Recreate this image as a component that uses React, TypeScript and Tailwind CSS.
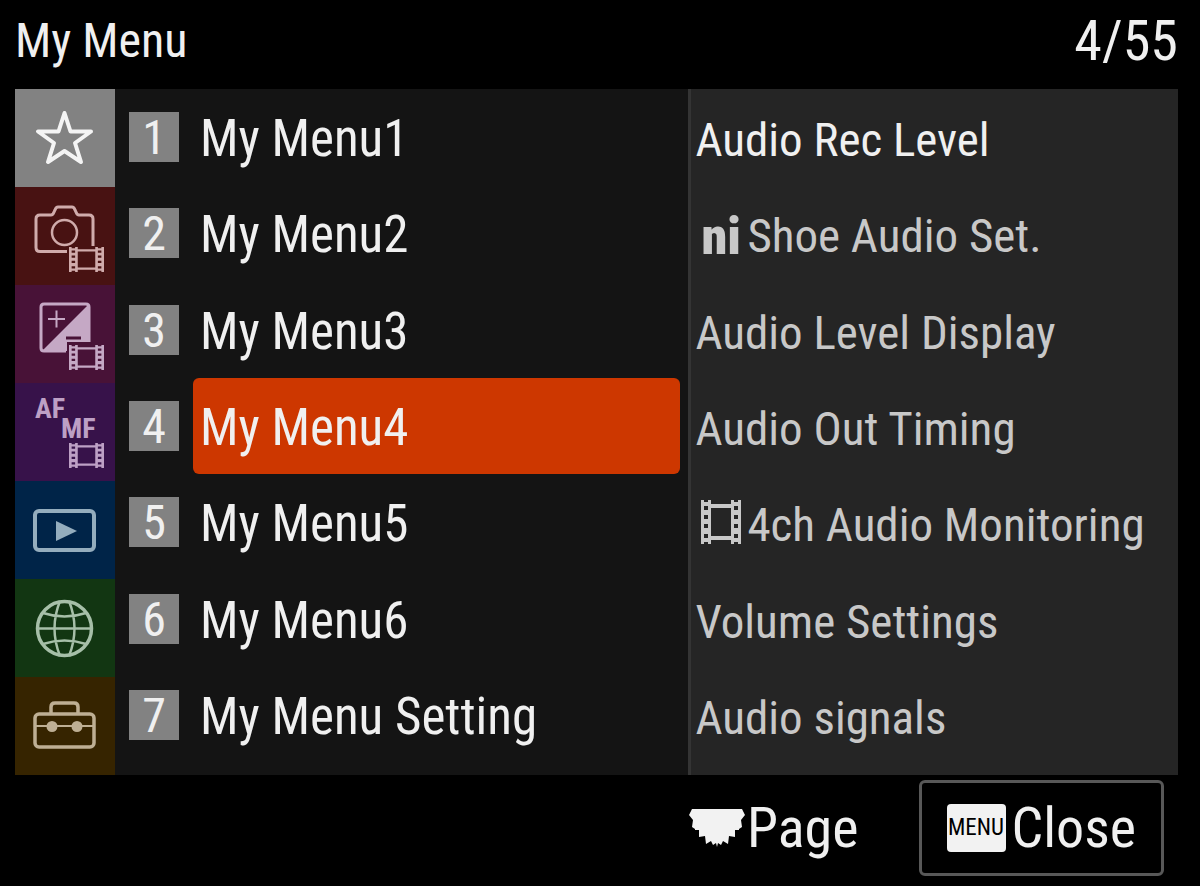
import React from 'react';

type IconProps = { className?: string };

function FilmIcon({ className }: IconProps) {
    return (
        <svg viewBox="0 0 40 44" preserveAspectRatio="none" className={className} fill="currentColor" stroke="none" aria-hidden="true">
            <path d="M0 0h3v2h4V0h3v4h20V0h3v2h4V0h3v44h-3v-2h-4v2h-3v-4H10v4H7v-2H3v2H0zM10 8v28h20V8zM3 6v4h4V6zM3 15v4h4v-4zM3 24v4h4v-4zM3 34v4h4v-4zM33 6v4h4V6zM33 15v4h4v-4zM33 24v4h4v-4zM33 34v4h4v-4z" fillRule="evenodd" />
        </svg>
    );
}

function StarIcon() {
    return (
        <svg viewBox="0 0 100 98" className="w-full" fill="none" stroke="#f4f4f4" strokeWidth="4" strokeLinejoin="round" aria-hidden="true">
            <path d="M49.500 24L55.500 42.500H76L60 54L66 73L49.500 62L33 73L39 54L23 42.500H43.500Z" />
        </svg>
    );
}

function CameraIcon() {
    return (
        <svg viewBox="0 0 100 98" className="w-full text-[#d0abab]" fill="none" stroke="currentColor" strokeWidth="3" aria-hidden="true">
            <path d="M52 64.500H25q-4 0-4-4V32q0-4 4-4h11q2 0 3-3l1-2q1-3 3-3h14q2 0 3 3l1 2q1 3 3 3h10q4 0 4 4v27" />
            <circle cx="49.500" cy="45.500" r="12.500" strokeWidth="2.500" />
            <svg x="54" y="60" width="35" height="25"><FilmIcon /></svg>
        </svg>
    );
}

function ExposureIcon() {
    return (
        <svg viewBox="0 0 100 98" className="w-full text-[#c5a8c5]" fill="none" stroke="currentColor" aria-hidden="true">
            <path d="M51 66H29q-3 0-3-3V22q0-3 3-3h42q3 0 3 3v35" strokeWidth="3" />
            <path d="M28 65L73 20v37H52v9H28z" fill="currentColor" stroke="none" />
            <path d="M33 34h17M41.500 25.500v17" strokeWidth="2" />
            <path d="M51 53h15" stroke="#481237" strokeWidth="3" />
            <svg x="54" y="60" width="35" height="25"><FilmIcon /></svg>
        </svg>
    );
}

function FocusIcon() {
    return (
        <div className="flex h-full flex-col pt-4 pl-5 text-[#bda0c5]">
            <span className="text-[28px]/5 font-bold">AF</span>
            <span className="pl-[26px] text-[28px]/5 font-bold">MF</span>
            <FilmIcon className="mt-1 ml-[34px] h-[25px] w-[35px]" />
        </div>
    );
}

function PlayIcon() {
    return (
        <svg viewBox="0 0 100 98" className="w-full text-[#94adbd]" fill="none" stroke="currentColor" strokeWidth="4" aria-hidden="true">
            <rect x="20" y="30" width="59" height="39" rx="4" />
            <path d="M41 40v20l21-10z" fill="currentColor" stroke="none" />
        </svg>
    );
}

function GlobeIcon() {
    return (
        <svg viewBox="0 0 100 98" className="w-full text-[#a6bfa8]" fill="none" stroke="currentColor" strokeWidth="2.500" aria-hidden="true">
            <circle cx="49.500" cy="49.500" r="27" strokeWidth="3.500" />
            <path d="M22 49.500h55M28 34q21.500 7 43 0M28 65q21.500-7 43 0M45 22q-11 27.500 0 55M54 22q11 27.500 0 55" />
        </svg>
    );
}

function ToolboxIcon() {
    return (
        <svg viewBox="0 0 100 98" className="w-full text-[#beaf94]" fill="none" stroke="currentColor" strokeWidth="3.500" aria-hidden="true">
            <rect x="20" y="37" width="59" height="33" rx="4" />
            <path d="M36 36v-6q0-4 4-4h19q4 0 4 4v6" />
            <path d="M20 49h59" strokeWidth="2" />
            <circle cx="37" cy="49.500" r="5.500" fill="currentColor" stroke="none" />
            <circle cx="62" cy="49.500" r="5.500" fill="currentColor" stroke="none" />
        </svg>
    );
}

function DialIcon() {
    return (
        <svg viewBox="0 0 56 38" className="mr-0.5 h-[38px] w-14" fill="#f2f2f2" aria-hidden="true">
            <path d="M3 0H53L56 6L52 11L53 18L50 20V21H46V28L40 27L39 35L34 32L32 36L29 34L28 38L27 34L24 36L22 32L17 35L16 27L10 28V21H6V20L3 18L4 11L0 6Z" />
        </svg>
    );
}

const tabs = [
    { label: 'My Menu', icon: <StarIcon />, color: 'bg-[#828282]' },
    { label: 'Shooting', icon: <CameraIcon />, color: 'bg-[#481212]' },
    { label: 'Exposure/Color', icon: <ExposureIcon />, color: 'bg-[#481237]' },
    { label: 'Focus', icon: <FocusIcon />, color: 'bg-[#37124a]' },
    { label: 'Playback', icon: <PlayIcon />, color: 'bg-[#002448]' },
    { label: 'Network', icon: <GlobeIcon />, color: 'bg-[#123612]' },
    { label: 'Setup', icon: <ToolboxIcon />, color: 'bg-[#362400]' },
];

const pages = ['My Menu1', 'My Menu2', 'My Menu3', 'My Menu4', 'My Menu5', 'My Menu6', 'My Menu Setting'];

const settings = [
    { label: 'Audio Rec Level' },
    { label: 'Shoe Audio Set.', icon: <span className="w-[52px] pt-2 pl-1.5 text-[52px] font-black">ni</span> },
    { label: 'Audio Level Display' },
    { label: 'Audio Out Timing' },
    { label: '4ch Audio Monitoring', icon: <FilmIcon className="mx-1.5 h-11 w-10 shrink-0" /> },
    { label: 'Volume Settings' },
    { label: 'Audio signals' },
];

export default function App() {
    const [active, setActive] = React.useState(3);

    return (
        <div className="flex min-h-screen flex-col bg-black font-['Roboto_Condensed','Liberation_Sans_Narrow','Liberation_Sans',sans-serif] text-[#f0f0f0]">
            <header className="flex h-[89px] items-center justify-between pr-[22px] pb-2 pl-[15px]">
                <h1 className="text-5xl/[60px]">My Menu</h1>
                <span className="text-[56px]/[60px]">{active + 1}/55</span>
            </header>

            <main className="mr-[22px] ml-[15px] flex bg-[#141414]">
                <nav className="w-[100px] shrink-0">
                    {tabs.map((tab) => (
                        <button key={tab.label} aria-label={tab.label} className={`block h-[98px] w-full text-left ${tab.color}`}>
                            {tab.icon}
                        </button>
                    ))}
                </nav>

                <ol className="flex min-w-0 flex-1 flex-col pr-2 pb-3 pl-3.5">
                    {pages.map((page, i) => (
                        <li key={page} className="flex flex-1">
                            <button className="flex flex-1 items-center text-left" onClick={() => setActive(i)}>
                                <span className="mr-3.5 flex size-[50px] items-center justify-center bg-[#828282] pt-0.5 text-5xl/[48px]">
                                    {i + 1}
                                </span>
                                <span className={`flex h-full flex-1 items-center rounded-md pt-1 pl-[7px] text-[51px]/[60px] whitespace-nowrap ${i === active ? 'bg-[#cd3700]' : ''}`}>
                                    {page}
                                </span>
                            </button>
                        </li>
                    ))}
                </ol>

                <ul className="flex w-[42.1%] shrink-0 flex-col border-l-[3px] border-[#343434] bg-[#252525] pb-3 pl-1">
                    {settings.map((item, i) => (
                        <li key={item.label} className={`flex flex-1 items-center text-[47px]/[60px] whitespace-nowrap ${i === 0 ? '' : 'text-[#c8c8c8]'}`}>
                            {item.icon}
                            <span className="pt-1.5">{item.label}</span>
                        </li>
                    ))}
                </ul>
            </main>

            <footer className="flex items-center justify-end gap-[60px] pt-[5px] pr-9 text-[56px]/[60px]">
                <span className="flex items-center">
                    <DialIcon />
                    Page
                </span>
                <button className="flex h-24 items-center rounded-md border-[3px] border-[#585858] px-[25px]">
                    <span className="mr-1.5 flex h-12 w-[59px] items-center justify-center rounded-sm bg-[#f2f2f2] text-[23px] text-black">MENU</span>
                    Close
                </button>
            </footer>
        </div>
    );
}
